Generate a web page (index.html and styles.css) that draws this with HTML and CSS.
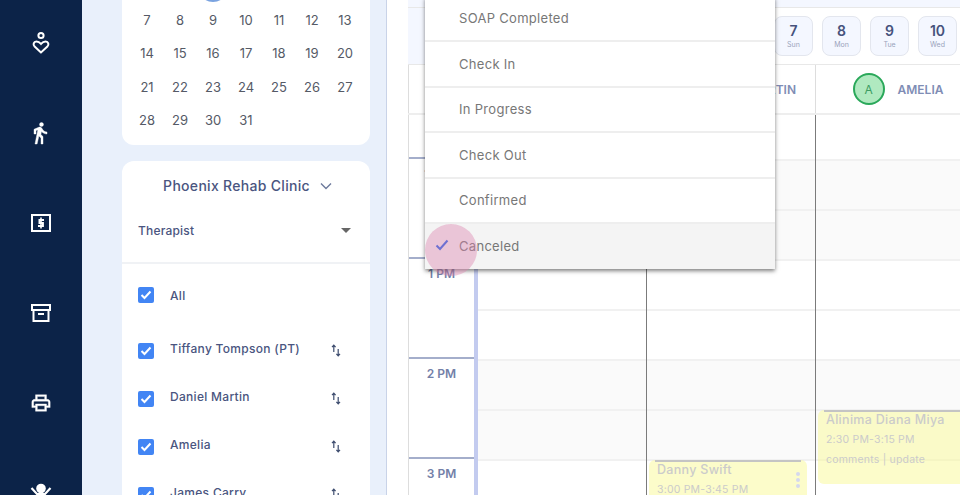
FILE: index.html
```html
<!DOCTYPE html>
<html lang="en">

<head>
    <meta charset="UTF-8">
    <title>Schedule</title>
    <link rel="stylesheet" href="styles.css">
</head>

<body>
    <div class="app">
        <nav class="rail">
            <a class="rail-item">
                <svg width="22" height="24" viewBox="0 0 22 24" fill="none" stroke="#fff" stroke-width="2"><circle cx="11" cy="4.5" r="2.6"/><path d="M11 21.5 4.6 15.6c-1.9-1.800-1-5.100 1.800-5.100 2 0 3.400 1 4.600 2.400 1.200-1.400 2.600-2.400 4.600-2.400 2.800 0 3.700 3.300 1.800 5.100z"/></svg>
            </a>
            <a class="rail-item">
                <svg width="24" height="24" viewBox="1 0 24 24" fill="#fff" stroke="#fff" stroke-width=".4"><path d="M13.5 5.5c1.1 0 2-.9 2-2s-.9-2-2-2-2 .9-2 2 .9 2 2 2zM9.8 8.9L7 23h2.1l1.8-8 2.1 2v6h2v-7.5l-2.1-2 .6-3C14.8 12 16.8 13 19 13v-2c-1.9 0-3.5-1-4.3-2.4l-1-1.6c-.4-.6-1-1-1.7-1-.3 0-.5.1-.8.1L6 8.3V13h2V9.6l1.8-.7"/></svg>
            </a>
            <a class="rail-item">
                <svg width="20" height="18" viewBox="0 0 20 18" fill="none" stroke="#fff"><rect x="1" y="1" width="18" height="16" stroke-width="2"/><path d="M13 6H8.500v3h3.400v3H7" stroke-width="2"/><path d="M10 3.500v11" stroke-width="1.600"/></svg>
            </a>
            <a class="rail-item">
                <svg width="20" height="18" viewBox="0 0 20 18" fill="none" stroke="#fff" stroke-width="2"><rect x="1" y="1" width="18" height="5"/><path d="M2.500 6v11h15V6"/><path d="M7 10h6"/></svg>
            </a>
            <a class="rail-item">
                <svg width="22" height="22" viewBox="0 0 24 24" fill="#fff" stroke="#fff" stroke-width=".4"><path d="M19 8h-1V3H6v5H5c-1.66 0-3 1.34-3 3v6h4v4h12v-4h4v-6c0-1.66-1.34-3-3-3zM8 5h8v3H8V5zm8 12v2H8v-4h8v2zm2-2v-2H6v2H4v-4c0-.55.45-1 1-1h14c.55 0 1 .45 1 1v4h-2z"/></svg>
            </a>
            <a class="rail-item">
                <svg width="22" height="24" viewBox="0 0 22 24"><circle cx="11" cy="7.500" r="4.800" fill="#fff"/><path d="M1.500 7 7 13h8l5.500-6" fill="none" stroke="#fff" stroke-width="2.200"/></svg>
            </a>
        </nav>

        <aside class="side">
            <section class="card month">
                <span class="day"></span><span class="day"></span><span class="day selected"></span><span class="day"></span><span class="day"></span><span class="day"></span><span class="day"></span>
                <span class="day">7</span><span class="day">8</span><span class="day">9</span><span class="day">10</span><span class="day">11</span><span class="day">12</span><span class="day">13</span>
                <span class="day">14</span><span class="day">15</span><span class="day">16</span><span class="day">17</span><span class="day">18</span><span class="day">19</span><span class="day">20</span>
                <span class="day">21</span><span class="day">22</span><span class="day">23</span><span class="day">24</span><span class="day">25</span><span class="day">26</span><span class="day">27</span>
                <span class="day">28</span><span class="day">29</span><span class="day">30</span><span class="day">31</span>
            </section>

            <section class="card filters">
                <div class="clinic">
                    <span>Phoenix Rehab Clinic</span>
                    <svg width="12" height="8" viewBox="0 0 12 8" fill="none" stroke="#6d7a9c" stroke-width="1.400"><path d="M1 1.500 6 6.500 11 1.500"/></svg>
                </div>
                <div class="select">
                    <span>Therapist</span>
                    <i class="caret"></i>
                </div>
                <ul class="checks">
                    <li class="check-row all">
                        <span class="box"><svg width="12" height="10" viewBox="0 0 12 10" fill="none" stroke="#fff" stroke-width="2"><path d="M1.500 5 4.500 8 10.500 1.500"/></svg></span>
                        <span class="check-label">All</span>
                    </li>
                    <li class="check-row">
                        <span class="box"><svg width="12" height="10" viewBox="0 0 12 10" fill="none" stroke="#fff" stroke-width="2"><path d="M1.500 5 4.500 8 10.500 1.500"/></svg></span>
                        <span class="check-label">Tiffany Tompson (PT)</span>
                        <svg class="sort" width="10" height="13" viewBox="0 0 10 13" fill="none" stroke="#3d4c6e" stroke-width="1.200"><path d="M2.800 8V1.500M1 3.200 2.800 1.200 4.600 3.200"/><path d="M7.200 5v6.500M5.400 9.800l1.800 2 1.800-2"/></svg>
                    </li>
                    <li class="check-row">
                        <span class="box"><svg width="12" height="10" viewBox="0 0 12 10" fill="none" stroke="#fff" stroke-width="2"><path d="M1.500 5 4.500 8 10.500 1.500"/></svg></span>
                        <span class="check-label">Daniel Martin</span>
                        <svg class="sort" width="10" height="13" viewBox="0 0 10 13" fill="none" stroke="#3d4c6e" stroke-width="1.200"><path d="M2.800 8V1.500M1 3.200 2.800 1.200 4.600 3.200"/><path d="M7.200 5v6.500M5.400 9.800l1.800 2 1.800-2"/></svg>
                    </li>
                    <li class="check-row">
                        <span class="box"><svg width="12" height="10" viewBox="0 0 12 10" fill="none" stroke="#fff" stroke-width="2"><path d="M1.500 5 4.500 8 10.500 1.500"/></svg></span>
                        <span class="check-label">Amelia</span>
                        <svg class="sort" width="10" height="13" viewBox="0 0 10 13" fill="none" stroke="#3d4c6e" stroke-width="1.200"><path d="M2.800 8V1.500M1 3.200 2.800 1.200 4.600 3.200"/><path d="M7.200 5v6.500M5.400 9.800l1.800 2 1.800-2"/></svg>
                    </li>
                    <li class="check-row">
                        <span class="box"><svg width="12" height="10" viewBox="0 0 12 10" fill="none" stroke="#fff" stroke-width="2"><path d="M1.500 5 4.500 8 10.500 1.500"/></svg></span>
                        <span class="check-label">James Carry</span>
                        <svg class="sort" width="10" height="13" viewBox="0 0 10 13" fill="none" stroke="#3d4c6e" stroke-width="1.200"><path d="M2.800 8V1.500M1 3.200 2.800 1.200 4.600 3.200"/><path d="M7.200 5v6.500M5.400 9.800l1.800 2 1.800-2"/></svg>
                    </li>
                </ul>
            </section>
        </aside>

        <main class="main">
            <div class="top-band"></div>

            <div class="date-strip">
                <span class="strip-start"></span>
                <div class="tiles">
                    <div class="tile"><b>7</b><small>Sun</small></div>
                    <div class="tile"><b>8</b><small>Mon</small></div>
                    <div class="tile"><b>9</b><small>Tue</small></div>
                    <div class="tile"><b>10</b><small>Wed</small></div>
                </div>
            </div>

            <div class="col-head">
                <div class="head-time"></div>
                <div class="head-col first"></div>
                <div class="head-col second"><span class="head-name">DANIEL MARTIN</span></div>
                <div class="head-col third">
                    <span class="avatar">A</span>
                    <span class="head-name">AMELIA</span>
                </div>
            </div>

            <div class="body">
                <div class="time-col">
                    <div class="hour start"></div>
                    <div class="hour">12 PM</div>
                    <div class="hour">1 PM</div>
                    <div class="hour">2 PM</div>
                    <div class="hour">3 PM</div>
                </div>
                <div class="stripe"></div>
                <div class="days">
                    <div class="rows">
                        <div class="slot start"></div>
                        <div class="slot shade"></div>
                        <div class="slot shade"></div>
                        <div class="slot"></div>
                        <div class="slot"></div>
                        <div class="slot shade"></div>
                        <div class="slot shade"></div>
                        <div class="slot"></div>
                    </div>
                    <div class="day-col first"></div>
                    <div class="day-col second">
                        <div class="event danny">
                            <p class="event-name">Danny Swift</p>
                            <p class="event-time">3:00 PM-3:45 PM</p>
                            <span class="dots"></span>
                        </div>
                    </div>
                    <div class="day-col third">
                        <div class="event alinima">
                            <p class="event-name">Alinima Diana Miya</p>
                            <p class="event-time">2:30 PM-3:15 PM</p>
                            <p class="event-time notes">comments | update</p>
                        </div>
                    </div>
                </div>
            </div>

            <ul class="status-menu">
                <li>SOAP Completed</li>
                <li>Check In</li>
                <li>In Progress</li>
                <li>Check Out</li>
                <li>Confirmed</li>
                <li class="active">
                    <svg width="14" height="12" viewBox="0 0 14 12" fill="none" stroke="#1f62ea" stroke-width="2"><path d="M1.500 6.500 5 10 12.500 1.500"/></svg>
                    Canceled
                </li>
            </ul>
            <span class="click-mark"></span>
        </main>
    </div>
</body>

</html>
```

FILE: styles.css
```css
* {
    box-sizing: border-box;
}

body {
    margin: 0;
    font-family: Inter, "Open Sans", sans-serif;
    color: #4a5580;
}

ul {
    list-style: none;
    margin: 0;
    padding: 0;
}

p {
    margin: 0;
}

.app {
    display: flex;
    width: 960px;
    height: 495px;
    overflow: hidden;
    background-color: #fff;
}

/* left rail */
.rail {
    flex: 0 0 82px;
    background-color: #0c2348;
    margin-top: -2px;
}

.rail-item {
    display: flex;
    justify-content: center;
    align-items: center;
    height: 90px;
}

/* sidebar */
.side {
    flex: 0 0 305px;
    height: 495px;
    padding: 0 16px 0 40px;
    background-color: #e9f0fb;
    border-right: 1px solid #c9d3e8;
}

.card {
    background-color: #fff;
    border-radius: 12px;
}

.month {
    display: grid;
    grid-template-columns: repeat(7, 33px);
    grid-auto-rows: 33.33px;
    justify-content: center;
    margin-top: -40px;
    padding: 10px 0 8px;
}

.day {
    display: flex;
    justify-content: center;
    align-items: center;
    font-size: 13px;
    color: #555a66;
}

.day.selected::before {
    content: "";
    width: 30px;
    height: 30px;
    border-radius: 50%;
    background-color: #7aa3e0;
}

.filters {
    margin-top: 16px;
    height: 400px;
}

.clinic {
    display: flex;
    justify-content: center;
    align-items: center;
    gap: 10px;
    height: 50px;
    padding-left: 3px;
    font-size: 14px;
    font-weight: 500;
    letter-spacing: .3px;
}

.select {
    display: flex;
    justify-content: space-between;
    align-items: center;
    height: 53px;
    padding: 0 19px 12px 16px;
    border-bottom: 2px solid #f0f2f5;
    font-size: 12px;
    font-weight: 500;
    letter-spacing: .2px;
}

.caret {
    border-left: 5px solid transparent;
    border-right: 5px solid transparent;
    border-top: 5px solid #666;
}

.checks {
    padding: 23px 29px 0 16px;
}

.check-row {
    display: flex;
    align-items: flex-start;
    height: 48px;
}

.check-row.all {
    height: 56px;
}

.box {
    display: flex;
    justify-content: center;
    align-items: center;
    flex: 0 0 16px;
    height: 16px;
    border-radius: 2px;
    background-color: #4285f4;
}

.check-label {
    flex: 1;
    margin: -2px 0 0 16px;
    font-size: 12px;
    line-height: 16px;
    font-weight: 500;
    letter-spacing: .3px;
}

.all .check-label {
    margin-top: 1px;
}

.sort {
    margin-top: 1px;
}

/* calendar */
.main {
    position: relative;
    flex: 1;
    min-width: 0;
    padding-left: 21px;
    overflow: hidden;
}

.top-band {
    height: 8px;
    background-color: #f4f7ff;
    border-bottom: 1px solid #e8e8e8;
}

.date-strip {
    display: flex;
    justify-content: space-between;
    height: 57px;
    border-bottom: 1px solid #e8e8e8;
}

.strip-start {
    width: 80px;
    background-color: #f4f7ff;
}

.tiles {
    display: flex;
    gap: 9px;
    padding: 8px 3px 0 0;
}

.tile {
    display: flex;
    flex-direction: column;
    align-items: center;
    width: 39px;
    height: 40px;
    padding-top: 5px;
    background-color: #f4f7ff;
    border: 1px solid #e3e6ee;
    border-radius: 8px;
}

.tile b {
    font-size: 14px;
    line-height: 18px;
    font-weight: 600;
    color: #46527c;
}

.tile small {
    font-size: 7px;
    line-height: 10px;
    color: #9aa3bc;
}

.col-head {
    display: flex;
    height: 50px;
    border-bottom: 2px solid #eee;
}

.head-time {
    flex: 0 0 70px;
    border-left: 1px solid #ddd;
}

.head-col {
    display: flex;
    justify-content: center;
    align-items: center;
    gap: 13px;
}

.head-col.first {
    flex: 0 0 168px;
}

.head-col.second {
    flex: 0 0 169px;
    justify-content: flex-end;
    padding-right: 19px;
}

.head-col.third {
    flex: 1;
    padding-left: 20px;
    border-left: 1px solid #ddd;
}

.avatar {
    display: flex;
    justify-content: center;
    align-items: center;
    width: 32px;
    height: 32px;
    border: 2px solid #2aa85a;
    border-radius: 50%;
    background-color: #b0e9c0;
    font-size: 12px;
    color: #3d9d63;
}

.head-name {
    font-size: 12px;
    font-weight: 600;
    color: #7f8db5;
}

.body {
    display: flex;
    height: 396px;
}

.time-col {
    flex: 0 0 66px;
    border-left: 1px solid #ddd;
}

.hour {
    height: 100px;
    padding-top: 7px;
    border-top: 2px solid #a4aecb;
    font-size: 12px;
    line-height: 16px;
    font-weight: 600;
    text-align: center;
    color: #7380a8;
}

.hour.start {
    height: 42px;
    padding: 0;
    border: 0;
}

.stripe {
    flex: 0 0 4px;
    background-color: #c3cbef;
}

.days {
    position: relative;
    display: flex;
    flex: 1;
}

.rows {
    position: absolute;
    top: 0;
    left: 0;
    right: 0;
}

.slot {
    height: 50px;
    border-bottom: 2px solid #f1f1f1;
}

.slot.start {
    height: 46px;
}

.slot.shade {
    background-color: #fafafa;
}

.day-col {
    position: relative;
    border-left: 1px solid #7b7b7b;
}

.day-col.first {
    flex: 0 0 168px;
    border-left: 0;
}

.day-col.second {
    flex: 0 0 169px;
}

.day-col.third {
    flex: 1;
}

.event {
    position: absolute;
    border-radius: 6px;
    background-color: rgba(250, 250, 150, .5);
    color: #cbcbcb;
}

.event::before {
    content: "";
    position: absolute;
    top: 0;
    left: 6px;
    right: 6px;
    height: 2px;
    background-color: #c4c4c4;
}

.event-name {
    font-size: 12.5px;
    line-height: 18px;
    font-weight: 500;
    letter-spacing: .3px;
}

.event-time {
    margin-top: 3px;
    font-size: 10.5px;
    line-height: 15px;
    letter-spacing: .2px;
}

.event-time.notes {
    margin-top: 5px;
}

.danny {
    top: 345px;
    left: 2px;
    width: 158px;
    height: 60px;
    padding: 1px 0 0 8px;
}

.alinima {
    top: 295px;
    left: 2px;
    width: 160px;
    height: 74px;
    padding: 1px 0 0 8px;
}

.alinima::before {
    right: 0;
}

.dots {
    position: absolute;
    top: 12px;
    right: 7px;
    width: 4px;
    height: 4px;
    border-radius: 50%;
    background-color: #d5d8ee;
    box-shadow: 0 6px 0 #d5d8ee, 0 12px 0 #d5d8ee;
}

/* status dropdown */
.status-menu {
    position: absolute;
    top: -3.5px;
    left: 38px;
    width: 350px;
    background-color: #fff;
    box-shadow: 0 2px 4px rgba(0, 0, 0, .5);
}

.status-menu li {
    display: flex;
    align-items: center;
    height: 45.5px;
    padding-left: 34px;
    border-bottom: 2px solid #eee;
    font-size: 13px;
    letter-spacing: .3px;
    color: #777;
}

.status-menu li.active {
    position: relative;
    height: 44.5px;
    background-color: #f4f4f4;
    border-bottom: 0;
}

.status-menu li.active svg {
    position: absolute;
    left: 10px;
    top: 15px;
}

.click-mark {
    position: absolute;
    top: 224px;
    left: 38px;
    width: 52px;
    height: 52px;
    border-radius: 50%;
    background-color: rgba(220, 130, 175, .42);
}
```
